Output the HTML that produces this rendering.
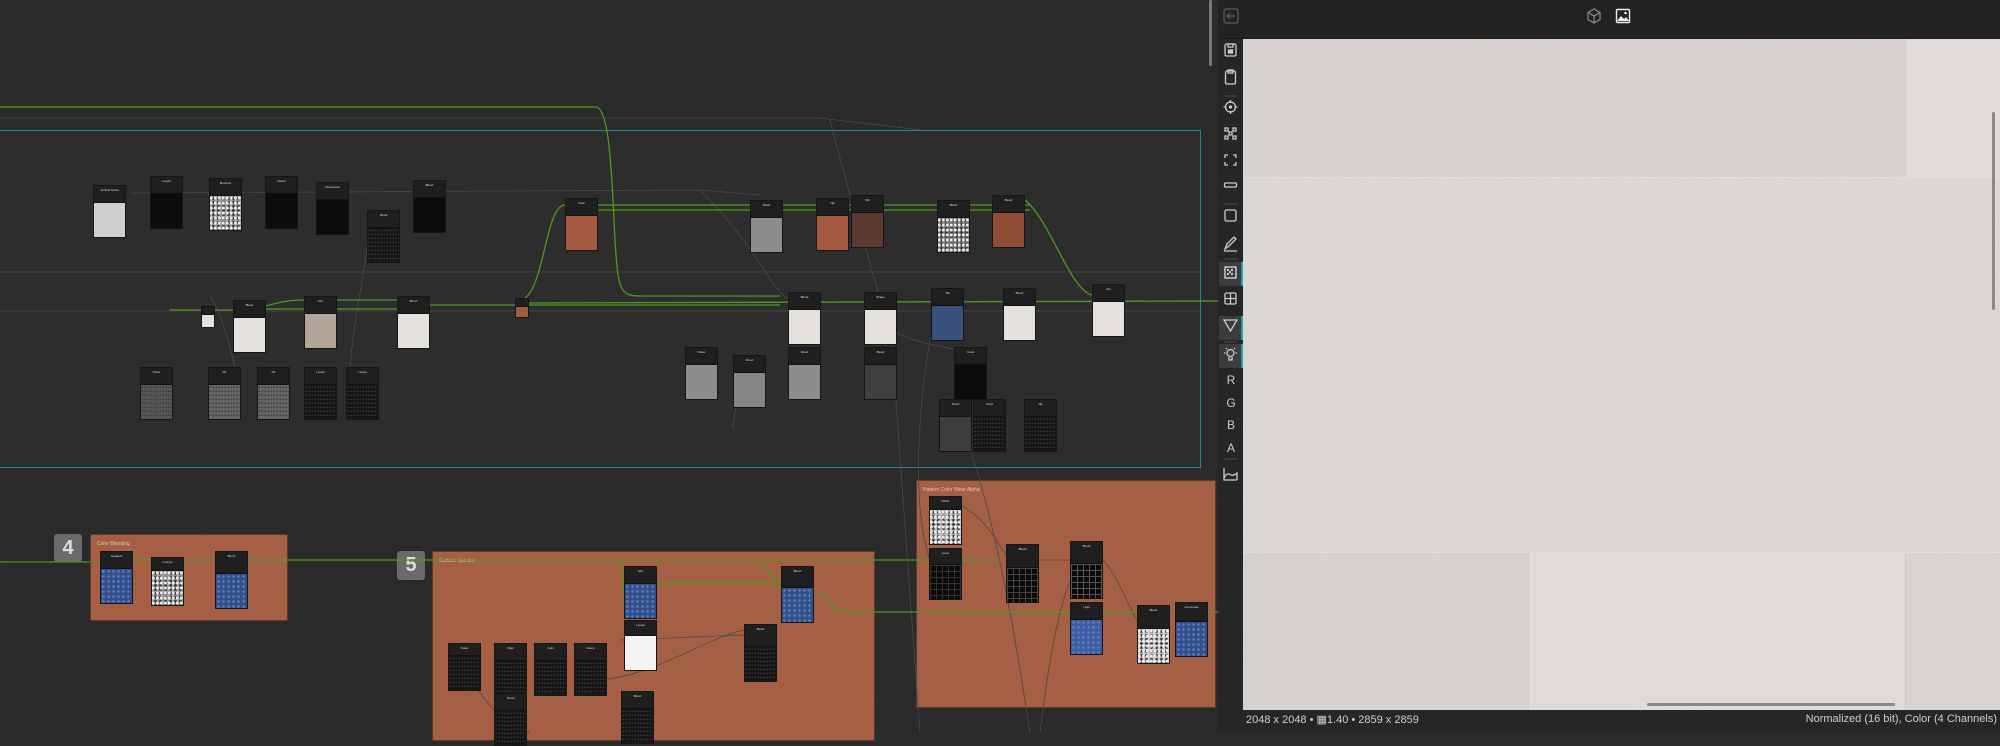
<!DOCTYPE html>
<html><head><meta charset="utf-8">
<style>
*{margin:0;padding:0;box-sizing:border-box}
body{width:2000px;height:733px;overflow:hidden;background:#2b2b2b;font-family:"Liberation Sans",sans-serif;position:relative}
.abs{position:absolute}
.n{position:absolute;width:33px;border:1px solid #161616;background:#1e1e1e}
.n .h{height:17px;background:#1f1f1f;color:#ddd;font-size:3px;text-align:center;padding-top:2px;border-bottom:1px solid #111}
.n .t{height:34px}
.w{background:#e4e0dc}.k{background:#0b0b0b}.g{background:#8d8d8d}.o{background:#a35a41}
.b{background:#34508a;background-image:radial-gradient(circle,#5b7bc0 1px,transparent 1.6px);background-size:5px 5px}
.nz{background:#999;background-image:radial-gradient(circle at 30% 40%,#eee 1px,transparent 2px),radial-gradient(circle at 70% 60%,#333 1px,transparent 2px);background-size:4px 5px,5px 4px}
.dk{background:#151515;background-image:radial-gradient(circle at 40% 60%,#3a3a3a 0.6px,transparent 1px);background-size:3px 4px}
.fr{position:absolute;background:#a45f45;border:1px solid #5a3a2d}
.fr span{position:absolute;left:6px;top:6px;font-size:5px;color:#e8c8b8}
.badge{position:absolute;background:#6a6a6a;color:#ddd;font-size:20px;font-weight:bold;text-align:center;border-radius:3px}
.tb{position:absolute;left:1219px;width:24px;height:24px}
.tb.act{background:#3c3c3c;border-right:2px solid #1fa3b3}
.tl{position:absolute;left:1219px;width:24px;color:#ccc;font-size:12px;text-align:center}
</style></head><body>
<div class="abs" style="left:0;top:0;width:1218px;height:733px;background-image:linear-gradient(#2e2e2e 1px,transparent 1px),linear-gradient(90deg,#2e2e2e 1px,transparent 1px);background-size:100px 100px;background-color:#2a2a2a"></div>
<div class="abs" style="left:-2px;top:130px;width:1203px;height:338px;border:1px solid #1c8a8f;background:#2d2d2d"></div>

<div class="fr" style="left:90px;top:534px;width:198px;height:87px"><span>Color Blending</span></div>
<div class="badge" style="left:54px;top:534px;width:28px;height:28px;line-height:28px">4</div>
<div class="fr" style="left:432px;top:551px;width:443px;height:190px"><span>Surface Specks</span></div>
<div class="badge" style="left:397px;top:551px;width:28px;height:29px;line-height:29px">5</div>
<div class="fr" style="left:916px;top:480px;width:300px;height:228px"><span>Pattern Color Wear Alpha</span></div>

<svg class="abs" style="left:0;top:0" width="1218" height="733">
<g fill="none" stroke="#4a4a4a" stroke-width="0.8">
<path d="M0 118 L820 118 L920 130"/><path d="M130 193 L700 190 L760 195"/><path d="M0 272 L1200 272"/><path d="M0 311 L1200 311"/>
<path d="M700 190 C760 250 770 290 790 300"/><path d="M830 120 C850 200 870 260 880 300"/>
<path d="M210 295 C230 330 230 360 240 380"/><path d="M370 230 C360 300 350 340 350 380"/>
<path d="M930 340 C920 400 910 500 930 560"/><path d="M890 320 C900 450 910 600 920 733"/>
<path d="M740 380 C735 420 730 430 735 428"/><path d="M870 300 C880 330 900 340 960 350"/>
<path d="M960 420 C990 500 1010 600 1030 733"/><path d="M960 505 C990 520 1000 550 1010 560"/>
<path d="M1025 560 L1070 560"/><path d="M1103 560 C1120 580 1125 600 1137 620"/>
<path d="M1040 733 C1050 650 1060 600 1075 570"/><path d="M590 680 C650 680 700 640 744 630"/>
<path d="M620 640 L744 635"/><path d="M460 660 C480 700 500 720 530 733"/>
</g>
<g fill="none" stroke="#4f9a1f" stroke-width="1.3">
<path d="M0 107 L596 107 C610 108 612 180 615 240 C618 290 620 296 640 296 L780 296"/>
<path d="M515 303 L1218 301"/><path d="M515 305 L780 305"/>
<path d="M170 310 L233 310"/><path d="M266 306 C280 302 290 300 304 300 L400 300"/>
<path d="M266 309 L400 309"/><path d="M430 305 L515 305"/>
<path d="M522 300 C545 290 545 205 565 205 L1030 205"/>
<path d="M598 210 L1030 210"/><path d="M1025 200 C1050 220 1070 290 1092 295"/>
<path d="M0 562 L100 562" stroke="#5a8a20"/>
<path d="M130 560 L1000 560"/>
<path d="M620 562 C625 580 625 620 624 630"/>
<path d="M760 562 C770 570 775 580 781 590"/>
<path d="M658 583 L781 583"/>
<path d="M815 590 C830 600 835 612 846 612 L1218 612"/>
</g>
</svg>

<div class="n" style="left:93px;top:185px"><div class="h">Vertical Noise</div><div class="t w" style="background:#cfcfcf"></div></div>
<div class="n" style="left:150px;top:176px"><div class="h">Levels</div><div class="t k"></div></div>
<div class="n" style="left:209px;top:178px"><div class="h">Moisture</div><div class="t nz"></div></div>
<div class="n" style="left:265px;top:176px"><div class="h">Clamp</div><div class="t k"></div></div>
<div class="n" style="left:316px;top:182px"><div class="h">Directional</div><div class="t k"></div></div>
<div class="n" style="left:367px;top:210px"><div class="h">Flood</div><div class="t dk"></div></div>
<div class="n" style="left:413px;top:180px"><div class="h">Blend</div><div class="t k"></div></div>
<div class="n" style="left:565px;top:198px"><div class="h">Color</div><div class="t o"></div></div>
<div class="n" style="left:750px;top:200px"><div class="h">Mask</div><div class="t g"></div></div>
<div class="n" style="left:816px;top:198px"><div class="h">Tile</div><div class="t o"></div></div>
<div class="n" style="left:851px;top:195px"><div class="h">Mix</div><div class="t" style="background:#5a3a30"></div></div>
<div class="n" style="left:937px;top:200px"><div class="h">Blend</div><div class="t nz" style="background-color:#777"></div></div>
<div class="n" style="left:992px;top:195px"><div class="h">Blend</div><div class="t" style="background:#8f4e35"></div></div>
<div class="n" style="left:201px;top:306px;width:14px"><div class="h" style="height:8px"></div><div class="t w" style="height:12px"></div></div>
<div class="n" style="left:233px;top:300px"><div class="h">Blend</div><div class="t w"></div></div>
<div class="n" style="left:304px;top:296px"><div class="h">Mix</div><div class="t" style="background:#b3a598"></div></div>
<div class="n" style="left:397px;top:296px"><div class="h">Blend</div><div class="t w"></div></div>
<div class="n" style="left:515px;top:298px;width:14px"><div class="h" style="height:8px"></div><div class="t o" style="height:10px"></div></div>
<div class="n" style="left:788px;top:292px"><div class="h">Blend</div><div class="t w"></div></div>
<div class="n" style="left:864px;top:292px"><div class="h">Shape</div><div class="t w"></div></div>
<div class="n" style="left:931px;top:288px"><div class="h">Tile</div><div class="t" style="background:#3a507c"></div></div>
<div class="n" style="left:1003px;top:288px"><div class="h">Blend</div><div class="t w"></div></div>
<div class="n" style="left:1092px;top:284px"><div class="h">Out</div><div class="t w"></div></div>
<div class="n" style="left:140px;top:367px"><div class="h">Noise</div><div class="t dk" style="background-color:#555"></div></div>
<div class="n" style="left:208px;top:367px"><div class="h">Dir</div><div class="t dk" style="background-color:#666"></div></div>
<div class="n" style="left:257px;top:367px"><div class="h">Dir</div><div class="t dk" style="background-color:#666"></div></div>
<div class="n" style="left:304px;top:367px"><div class="h">Levels</div><div class="t dk"></div></div>
<div class="n" style="left:346px;top:367px"><div class="h">Levels</div><div class="t dk"></div></div>
<div class="n" style="left:685px;top:347px"><div class="h">Noise</div><div class="t g"></div></div>
<div class="n" style="left:733px;top:355px"><div class="h">Flood</div><div class="t g" style="background:#858585"></div></div>
<div class="n" style="left:788px;top:347px"><div class="h">Flood</div><div class="t g"></div></div>
<div class="n" style="left:864px;top:347px"><div class="h">Blend</div><div class="t" style="background:#3f3f3f"></div></div>
<div class="n" style="left:954px;top:347px"><div class="h">Grad</div><div class="t k"></div></div>
<div class="n" style="left:939px;top:399px"><div class="h">Flood</div><div class="t" style="background:#3d3d3d"></div></div>
<div class="n" style="left:973px;top:399px"><div class="h">Grad</div><div class="t dk"></div></div>
<div class="n" style="left:1024px;top:399px"><div class="h">Tile</div><div class="t dk"></div></div>

<div class="n" style="left:100px;top:551px"><div class="h">Gradient</div><div class="t b"></div></div>
<div class="n" style="left:151px;top:557px"><div class="h" style="height:13px">Grunge</div><div class="t nz"></div></div>
<div class="n" style="left:215px;top:551px"><div class="h" style="height:22px">Blend</div><div class="t b"></div></div>
<div class="n" style="left:624px;top:566px"><div class="h">Mix</div><div class="t b"></div></div>
<div class="n" style="left:624px;top:620px"><div class="h" style="height:15px">Levels</div><div class="t" style="background:#f3f3f3"></div></div>
<div class="n" style="left:781px;top:566px"><div class="h" style="height:21px">Blend</div><div class="t b"></div></div>
<div class="n" style="left:744px;top:624px"><div class="h" style="height:22px">Blend</div><div class="t dk"></div></div>
<div class="n" style="left:448px;top:643px"><div class="h" style="height:12px">Noise</div><div class="t dk"></div></div>
<div class="n" style="left:494px;top:643px"><div class="h">Warp</div><div class="t dk"></div></div>
<div class="n" style="left:534px;top:643px"><div class="h">Cells</div><div class="t dk"></div></div>
<div class="n" style="left:574px;top:643px"><div class="h">Clamp</div><div class="t dk"></div></div>
<div class="n" style="left:494px;top:693px"><div class="h">Flood</div><div class="t dk"></div></div>
<div class="n" style="left:621px;top:691px"><div class="h">Blend</div><div class="t dk"></div></div>
<div class="n" style="left:929px;top:496px"><div class="h" style="height:13px">Perlin</div><div class="t nz" style="background-color:#bbb"></div></div>
<div class="n" style="left:929px;top:548px"><div class="h" style="height:16px">Lines</div><div class="t k" style="background-image:linear-gradient(#333 1px,transparent 1px),linear-gradient(90deg,#333 1px,transparent 1px);background-size:6px 6px"></div></div>
<div class="n" style="left:1006px;top:544px"><div class="h" style="height:23px">Blend</div><div class="t k" style="background-image:linear-gradient(#444 1px,transparent 1px),linear-gradient(90deg,#444 1px,transparent 1px);background-size:6px 6px"></div></div>
<div class="n" style="left:1070px;top:541px"><div class="h" style="height:22px">Blend</div><div class="t k" style="background-image:linear-gradient(#555 1px,transparent 1px),linear-gradient(90deg,#555 1px,transparent 1px);background-size:6px 6px"></div></div>
<div class="n" style="left:1070px;top:602px"><div class="h">Light</div><div class="t b" style="background-color:#3d5da0"></div></div>
<div class="n" style="left:1137px;top:605px"><div class="h" style="height:23px">Blend</div><div class="t nz" style="background-color:#ccc"></div></div>
<div class="n" style="left:1175px;top:602px"><div class="h" style="height:19px">Composite</div><div class="t b"></div></div>

<div class="abs" style="left:1209px;top:0;width:3px;height:66px;background:#777;border-radius:2px"></div>

<div class="abs" style="left:1218px;top:0;width:782px;height:39px;background:#232323;border-bottom:1px solid #1a1a1a"></div>
<div class="abs" style="left:1218px;top:39px;width:25px;height:694px;background:#262626"></div>
<div class="abs" style="left:1218px;top:710px;width:782px;height:23px;background:#262626"></div>
<div class="abs" style="left:1246px;top:713px;font-size:11px;color:#cfcfcf">2048 x 2048 • ▦1.40 • 2859 x 2859</div>
<div class="abs" style="right:3px;top:713px;font-size:11px;color:#cfcfcf">Normalized (16 bit), Color (4 Channels)</div>

<div class="abs" style="left:1243px;top:39px;width:757px;height:671px;background:#dcd7d3;overflow:hidden">
 <div class="abs" style="left:0;top:0;width:662px;height:138px;background:#d9d4d0"></div>
 <div class="abs" style="left:662px;top:0;width:95px;height:138px;background:#e3dfdb;border-left:1px solid #cfcac6"></div>
 <div class="abs" style="left:0;top:138px;width:757px;height:375px;background:#dedad6;border-top:1px solid #e6e2de"></div>
 <div class="abs" style="left:0;top:513px;width:287px;height:158px;background:#d8d3cf;border-top:1px solid #e5e1dd"></div>
 <div class="abs" style="left:287px;top:513px;width:375px;height:158px;background:#e2ddd9;border-left:1px solid #ebe7e3;border-top:1px solid #e5e1dd"></div>
 <div class="abs" style="left:662px;top:513px;width:95px;height:158px;background:#dad5d1;border-left:1px solid #cfcac6;border-top:1px solid #e5e1dd"></div>
 <svg class="abs" style="left:0;top:0" width="757" height="671"><filter id="f"><feTurbulence type="fractalNoise" baseFrequency="0.9" numOctaves="1" seed="3"/><feColorMatrix values="0 0 0 0 0.6  0 0 0 0 0.55  0 0 0 0 0.6  0 0 0 -3 1.9"/></filter><rect width="757" height="671" filter="url(#f)" opacity="0.25"/></svg>
 <div class="abs" style="left:749px;top:73px;width:3px;height:198px;background:#8a8a8a;border-radius:2px"></div>
 <div class="abs" style="left:404px;top:664px;width:248px;height:3px;background:#8a8a8a;border-radius:2px"></div>
</div>

<svg class="abs" style="left:1222px;top:7px" width="18" height="18"><rect x="2" y="2" width="14" height="14" rx="2" fill="none" stroke="#555" stroke-width="1.4"/><path d="M13 9H5M8 6L5 9L8 12" fill="none" stroke="#555" stroke-width="1.4"/></svg>
<svg class="abs" style="left:1586px;top:8px" width="16" height="16"><path d="M8 1L14 4.5V11.5L8 15L2 11.5V4.5Z M2 4.5L8 8L14 4.5 M8 8V15" fill="none" stroke="#8a8a8a" stroke-width="1.2"/></svg>
<svg class="abs" style="left:1615px;top:8px" width="16" height="16"><rect x="1.5" y="1.5" width="13" height="13" rx="1" fill="none" stroke="#eee" stroke-width="1.4"/><path d="M2 13L6 8L9 11L11 9L14 13Z" fill="#eee"/><circle cx="10.5" cy="5" r="1.3" fill="#eee"/></svg>

<div class="tb act" style="top:262px"></div>
<div class="tb act" style="top:316px"></div>
<div class="tb act" style="top:344px"></div>
<svg class="abs" style="left:1219px;top:40px" width="24" height="460" fill="none" stroke="#ccc" stroke-width="1.3">
<rect x="6" y="4" width="11" height="12" rx="1.5"/><rect x="9" y="4" width="5" height="3"/><rect x="9.5" y="10" width="4" height="3" fill="#ccc"/>
<rect x="6.5" y="31" width="10" height="13" rx="1.5"/><rect x="9" y="30" width="5" height="3"/>
<line x1="5" y1="56" x2="18" y2="56" stroke="#444"/>
<circle cx="11.5" cy="67" r="5"/><path d="M11.5 60v3M11.5 71v3M4.5 67h3M15.5 67h3"/><circle cx="11.5" cy="67" r="1" fill="#ccc"/>
<path d="M6 88h3v3h-3zM14 88h3v3h-3zM6 96h3v3h-3zM14 96h3v3h-3zM10 92h3v3h-3z"/>
<path d="M6 118v-3h3M14 115h3v3M17 122v3h-3M9 125h-3v-3"/>
<rect x="5.5" y="143" width="12" height="4" rx="1"/>
<line x1="5" y1="164" x2="18" y2="164" stroke="#444"/>
<rect x="6" y="170" width="11" height="11" rx="1.5"/>
<path d="M6 209l2-5 7-7 2 2-7 7zM5 211h13"/>
<line x1="5" y1="219" x2="18" y2="219" stroke="#444"/>
<rect x="6" y="227" width="11" height="11" stroke="#ddd"/><path d="M8 229h2v2h-2zM12 229h2v2h-2zM10 231h2v2h-2zM8 233h2v2h-2zM12 233h2v2h-2z" fill="#ccc" stroke="none"/>
<rect x="6" y="253" width="11" height="11" rx="1.5"/><path d="M11.5 253v11M6 258.5h11"/>
<path d="M5 280h13l-6.5 11z"/>
<line x1="5" y1="302" x2="18" y2="302" stroke="#444"/>
<circle cx="11.5" cy="313" r="3.5"/><path d="M10 317v3h3v-3M5 313h1.5M16.5 313h1.5M7 308l1 1M16 308l-1 1"/>
<line x1="5" y1="419" x2="18" y2="419" stroke="#444"/>
<path d="M5 428v12h13M5 438c3-6 5-4 7-3s3 0 6-2v7"/>
</svg>
<div class="tl" style="top:373px">R</div>
<div class="tl" style="top:396px">G</div>
<div class="tl" style="top:418px">B</div>
<div class="tl" style="top:441px">A</div>
</body></html>
